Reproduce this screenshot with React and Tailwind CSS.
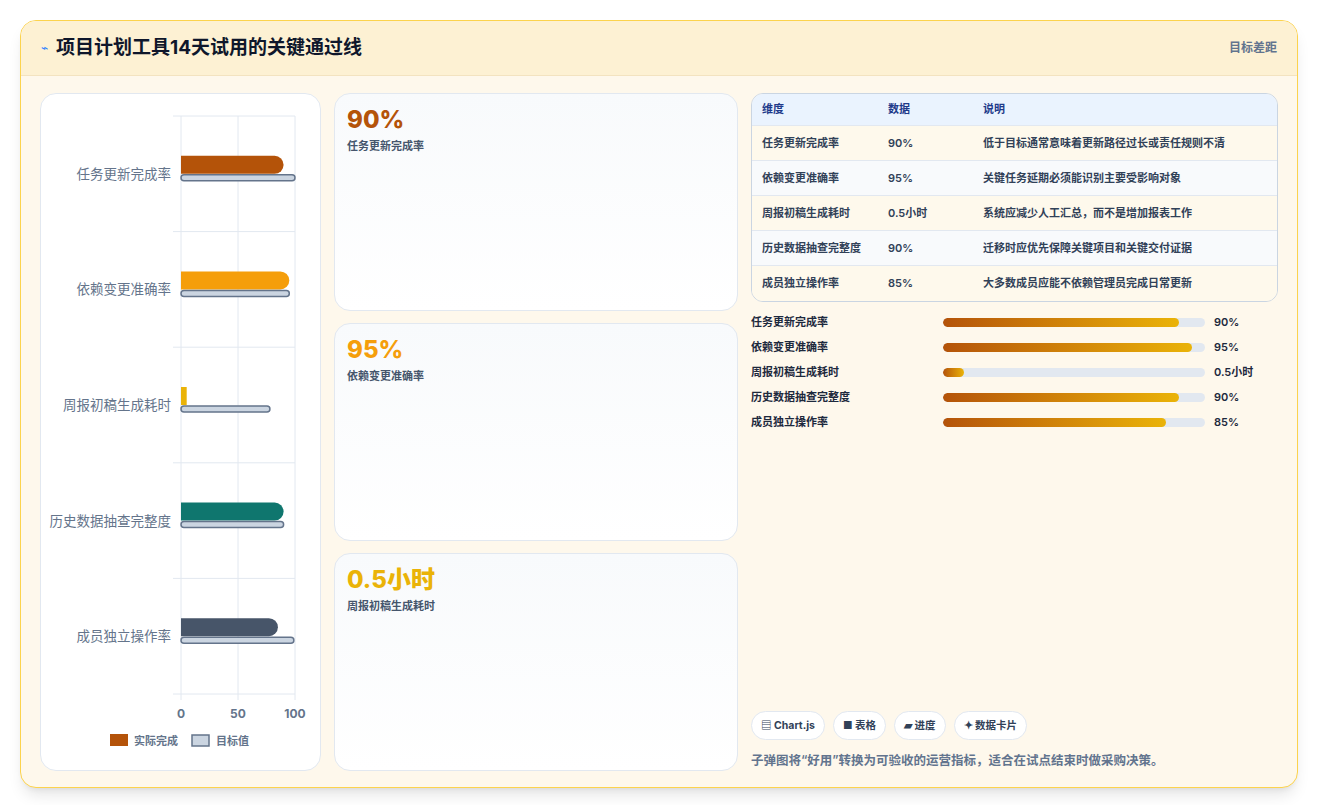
import React from "react";

const rows = [
  { k: "任务更新完成率", v: "90%", d: "低于目标通常意味着更新路径过长或责任规则不清", p: 90 },
  { k: "依赖变更准确率", v: "95%", d: "关键任务延期必须能识别主要受影响对象", p: 95 },
  { k: "周报初稿生成耗时", v: "0.5小时", d: "系统应减少人工汇总，而不是增加报表工作", p: 8 },
  { k: "历史数据抽查完整度", v: "90%", d: "迁移时应优先保障关键项目和关键交付证据", p: 90 },
  { k: "成员独立操作率", v: "85%", d: "大多数成员应能不依赖管理员完成日常更新", p: 85 },
];

const bars = [
  { a: 90, t: 100, c: "#b45309" },
  { a: 95, t: 95, c: "#f59e0b" },
  { a: 5, t: 78, c: "#eab308" },
  { a: 90, t: 90, c: "#0f766e" },
  { a: 85, t: 99, c: "#475569" },
];

function Chart() {
  const x0 = 140, w = 114, top = 22, band = 115.6;
  const sx = (v) => x0 + (v / 100) * w;
  return (
    <svg width="280" height="676" className="block">
      {[0, 1, 2, 3, 4, 5].map((i) => (
        <line key={i} x1={x0 - 8} x2={x0 + w} y1={top + i * band} y2={top + i * band} stroke="#e2e8f0" />
      ))}
      {[0, 50, 100].map((v) => (
        <line key={v} x1={sx(v)} x2={sx(v)} y1={top} y2={top + 5 * band + 6} stroke="#e2e8f0" />
      ))}
      {bars.map((b, i) => {
        const cy = top + i * band + band / 2;
        const end = sx(b.a);
        const d = b.a < 10
          ? `M${x0} ${cy - 18} H${end} V${cy} H${x0} Z`
          : `M${x0} ${cy - 18} H${end - 9} A9 9 0 0 1 ${end - 9} ${cy} H${x0} Z`;
        return (
          <g key={i}>
            <path d={d} fill={b.c} />
            <rect x={x0} y={cy + 1} width={sx(b.t) - x0} height={6} rx={3} fill="#cbd5e1" stroke="#64748b" strokeWidth="1.5" />
            <text x={x0 - 10} y={cy + 5} textAnchor="end" fontSize="13.5" fill="#64748b" fontFamily="'Noto Sans CJK SC', sans-serif">{rows[i].k}</text>
          </g>
        );
      })}
      {[0, 50, 100].map((v) => (
        <text key={v} x={sx(v)} y={top + 5 * band + 24} textAnchor="middle" fontSize="12" fontWeight="bold" fill="#64748b" fontFamily="Inter, sans-serif">{v}</text>
      ))}
      <rect x="69" y={top + 5 * band + 40} width="18" height="12" fill="#b45309" />
      <text x="93" y={top + 5 * band + 51} fontSize="11" fontWeight="bold" fill="#64748b" fontFamily="'Noto Sans CJK SC', sans-serif">实际完成</text>
      <rect x="151" y={top + 5 * band + 41} width="17" height="11" fill="#cbd5e1" stroke="#64748b" strokeWidth="1.5" />
      <text x="175" y={top + 5 * band + 51} fontSize="11" fontWeight="bold" fill="#64748b" fontFamily="'Noto Sans CJK SC', sans-serif">目标值</text>
    </svg>
  );
}

function Metric({ v, l, c }) {
  return (
    <div className="flex-1 rounded-2xl border border-slate-200 bg-gradient-to-b from-[#f8fafc] to-white px-[12px] py-[12px]">
      <div className={`text-[24px] font-extrabold leading-[28px] ${c}`}>{v}</div>
      <div className="mt-[4px] text-[11px] font-semibold text-slate-600">{l}</div>
    </div>
  );
}

export default function App() {
  return (
    <div className="min-h-[805px] bg-white p-[20px]" style={{ fontFamily: "Inter, 'Noto Sans CJK SC', sans-serif" }}>
      <div className="h-[768px] flex flex-col rounded-2xl border border-[#fcd34d] bg-[#fef8ec] shadow-lg overflow-hidden">
        <div className="h-[55px] shrink-0 flex items-center justify-between px-[20px] bg-[#fdf1d3] border-b border-[#f3e3c0]">
          <div className="flex items-center gap-[8px]">
            <span className="text-[12px] text-blue-500">⌁</span>
            <span className="text-[19px] font-bold text-slate-900">项目计划工具14天试用的关键通过线</span>
          </div>
          <span className="text-[12px] font-semibold text-slate-500">目标差距</span>
        </div>
        <div className="flex-1 flex gap-[13px] px-[19px] pt-[17px] pb-[18px]">
          <div className="w-[281px] shrink-0 rounded-2xl border border-slate-200 bg-white">
            <Chart />
          </div>
          <div className="w-[404px] shrink-0 flex flex-col gap-[12px]">
            <Metric v="90%" l="任务更新完成率" c="text-[#b45309]" />
            <Metric v="95%" l="依赖变更准确率" c="text-[#f59e0b]" />
            <Metric v="0.5小时" l="周报初稿生成耗时" c="text-[#eab308]" />
          </div>
          <div className="flex-1 flex flex-col">
            <div className="rounded-xl border border-slate-300 overflow-hidden text-[11px] font-semibold text-slate-700">
              <div className="flex h-[32px] items-center bg-[#eaf3fe] text-[#1e3a8a] border-b border-slate-200">
                <div className="w-[136px] shrink-0 pl-[10px]">维度</div>
                <div className="w-[95px] shrink-0">数据</div>
                <div>说明</div>
              </div>
              {rows.map((r, i) => (
                <div key={i} className={`flex h-[35px] items-center ${i % 2 ? "bg-[#f8fafc]" : "bg-[#fef9ec]"} ${i < 4 ? "border-b border-slate-200" : ""}`}>
                  <div className="w-[136px] shrink-0 pl-[10px]">{r.k}</div>
                  <div className="w-[95px] shrink-0">{r.v}</div>
                  <div className="whitespace-nowrap">{r.d}</div>
                </div>
              ))}
            </div>
            <div className="mt-[11px] flex flex-col gap-[7px]">
              {rows.map((r, i) => (
                <div key={i} className="flex items-center h-[18px] text-[11px] font-semibold text-slate-800">
                  <div className="w-[192px] shrink-0">{r.k}</div>
                  <div className="w-[262px] shrink-0 h-[9px] rounded-full bg-slate-200 overflow-hidden">
                    <div className="h-full rounded-full bg-gradient-to-r from-[#b45309] to-[#eab308]" style={{ width: r.p + "%" }} />
                  </div>
                  <div className="ml-[9px]">{r.v}</div>
                </div>
              ))}
            </div>
            <div className="mt-auto flex gap-[8px]">
              {["▤ Chart.js", "■ 表格", "▰ 进度", "✦ 数据卡片"].map((c) => (
                <span key={c} className="h-[29px] px-[9px] flex items-center rounded-full border border-slate-200 bg-white text-[10.5px] font-bold text-slate-700">{c}</span>
              ))}
            </div>
            <div className="mt-[12px] text-[12.5px] font-semibold text-slate-500">子弹图将“好用”转换为可验收的运营指标，适合在试点结束时做采购决策。</div>
          </div>
        </div>
      </div>
    </div>
  );
}
